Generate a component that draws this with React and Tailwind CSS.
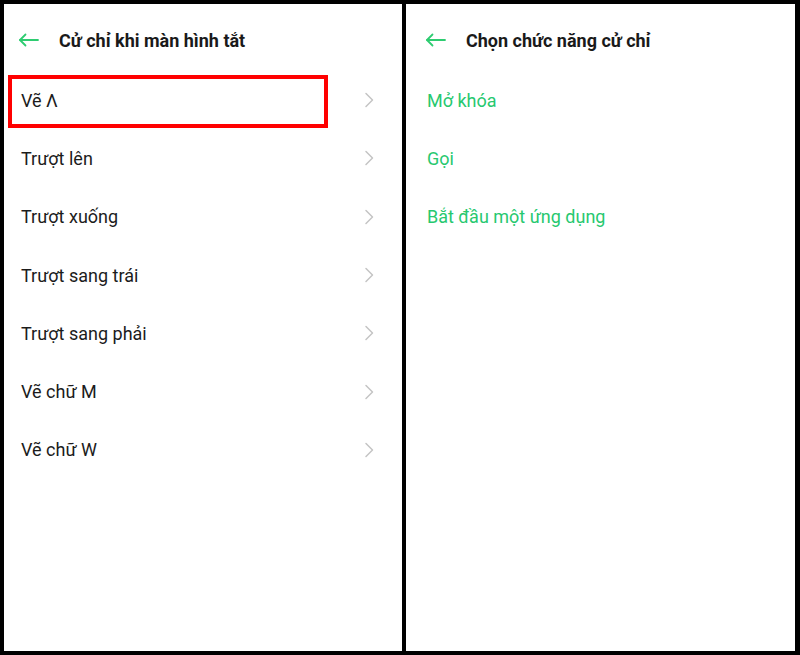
import React from 'react'

const font = { fontFamily: 'Roboto, "Noto Sans", sans-serif' }

function BackArrow(){
  return (
    <svg width="21" height="14" viewBox="0 0 21 14" fill="none" stroke="#2ecc71" strokeWidth="1.8" strokeLinecap="round" strokeLinejoin="round">
      <path d="M20 7H2" />
      <path d="M7.5 1.5L2 7l5.5 5.5" />
    </svg>
  )
}

function Chevron(){
  return (
    <svg width="10" height="16" viewBox="0 0 10 16" fill="none" stroke="#c4c4c4" strokeWidth="1.5" strokeLinecap="round" strokeLinejoin="round">
      <path d="M2 1.5L8.5 8 2 14.5" />
    </svg>
  )
}

const gestures = ['Vẽ Λ', 'Trượt lên', 'Trượt xuống', 'Trượt sang trái', 'Trượt sang phải', 'Vẽ chữ M', 'Vẽ chữ W']
const actions = ['Mở khóa', 'Gọi', 'Bắt đầu một ứng dụng']

export default function App(){
  return (
    <div className="w-[800px] h-[655px] bg-black flex gap-[4px] pt-[4px] pl-[4px] pr-[5px] pb-[4px]" style={font}>
      <div className="w-[398px] h-full bg-white flex flex-col">
        <div className="h-[67px] pt-[5px] flex items-center pl-[14px]">
          <BackArrow />
          <span className="ml-[20px] text-[18px] font-bold text-[#1a1a1a]">Cử chỉ khi màn hình tắt</span>
        </div>
        {gestures.map((g, i) => (
          <div key={g} className="relative h-[58.3px] flex items-center justify-between pl-[17px] pr-[28px]">
            <span className="text-[18px] text-[#1c1c1c]">{g}</span>
            <Chevron />
            {i === 0 && <div className="absolute left-[4px] top-[4px] w-[320px] h-[53px] border-[4.5px] border-[#ff0000]" />}
          </div>
        ))}
      </div>
      <div className="flex-1 h-full bg-white flex flex-col">
        <div className="h-[67px] pt-[5px] flex items-center pl-[19px]">
          <BackArrow />
          <span className="ml-[20px] text-[18px] font-bold text-[#1a1a1a]">Chọn chức năng cử chỉ</span>
        </div>
        {actions.map(a => (
          <div key={a} className="h-[58.3px] flex items-center pl-[21px]">
            <span className="text-[18px] text-[#27c86f]">{a}</span>
          </div>
        ))}
      </div>
    </div>
  )
}
